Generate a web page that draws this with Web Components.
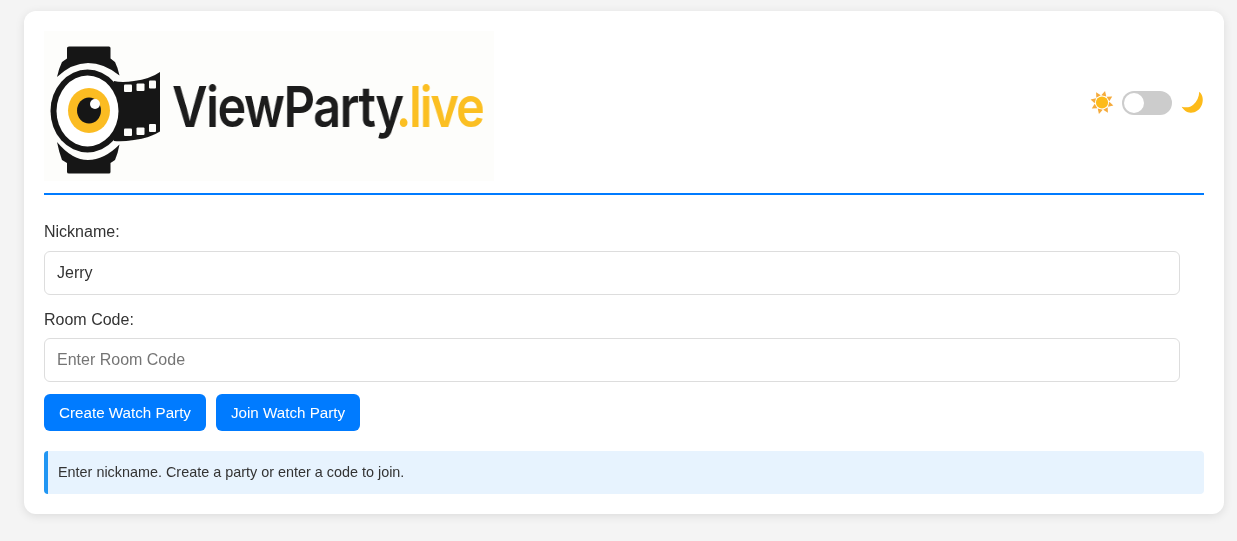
<!DOCTYPE html>
<html lang="en">
<head>
<meta charset="utf-8">
<title>ViewParty.live</title>
<style>
    html, body {
        margin: 0;
        height: 100%;
    }
    body {
        background: #f4f4f4;
        color: #333;
        font-family: "Liberation Sans", Arial, sans-serif;
        overflow: hidden;
    }
</style>
</head>
<body>
<vp-app>
    <vp-header></vp-header>
    <vp-field label="Nickname:" value="Jerry"></vp-field>
    <vp-field label="Room Code:" placeholder="Enter Room Code"></vp-field>
    <vp-actions>
        <vp-button>Create Watch Party</vp-button>
        <vp-button>Join Watch Party</vp-button>
    </vp-actions>
    <vp-status>Enter nickname. Create a party or enter a code to join.</vp-status>
</vp-app>

<script>
class VpApp extends HTMLElement {
    connectedCallback() {
        this.attachShadow({ mode: 'open' });
        this.shadowRoot.innerHTML = `
            <style>
                :host {
                    display: block;
                    box-sizing: border-box;
                    width: 1200px;
                    margin: 11px 0 0 24px;
                    padding: 20px;
                    background: #fff;
                    border-radius: 12px;
                    box-shadow: 0 2px 10px rgba(0, 0, 0, 0.1);
                    will-change: transform;
                }
            </style>
            <slot></slot>
        `;
    }
}

class VpHeader extends HTMLElement {
    connectedCallback() {
        this.attachShadow({ mode: 'open' });
        this.shadowRoot.innerHTML = `
            <style>
                :host {
                    display: flex;
                    justify-content: space-between;
                    align-items: center;
                    padding-bottom: 12px;
                    border-bottom: 2px solid #007bff;
                    margin-bottom: 24px;
                }
            </style>
            <vp-logo></vp-logo>
            <vp-theme-toggle></vp-theme-toggle>
        `;
    }
}

class VpLogo extends HTMLElement {
    connectedCallback() {
        this.attachShadow({ mode: 'open' });
        this.shadowRoot.innerHTML = `
            <style>
                :host {
                    display: block;
                    width: 450px;
                    height: 150px;
                }
                svg { display: block; }
                text {
                    font-family: Inter, "Liberation Sans", sans-serif;
                    font-size: 56px;
                    font-weight: 600;
                    letter-spacing: -1.6px;
                }
                .tld { letter-spacing: -2.4px; }
            </style>
            <svg width="450" height="150" viewBox="0 0 450 150">
                <defs>
                    <filter id="soft" x="-5%" y="-5%" width="110%" height="110%">
                        <feGaussianBlur stdDeviation="0.45"/>
                    </filter>
                </defs>
                <rect width="450" height="150" fill="#fdfdfb"/>
                <g filter="url(#soft)">
                    <path fill="#161616" d="M25 15.500H65Q66.500 15.500 66.500 17V27.500L71 31Q74 37 75.500 44.500Q60 32 44 32Q28 32 13 46Q15 37 18 31L23 27.500V17Q23 15.500 25 15.500Z"/>
                    <path fill="#161616" d="M13 111Q28 129 44 129Q60 129 75.500 113.500Q74 122 71 129L66.500 132V141Q66.500 142.500 65 142.500H25Q23 142.500 23 141V132L18 129Q15 121 13 111Z"/>
                    <path fill="#161616" d="M70 50Q78 52 90 50Q106 48 116 41V100.500Q106 107 90 109Q78 111 70 110Z"/>
                    <ellipse cx="43.500" cy="80" rx="37" ry="41.500" fill="#161616"/>
                    <ellipse cx="43.500" cy="80" rx="31" ry="35.500" fill="#fff"/>
                    <ellipse cx="45" cy="79.500" rx="21" ry="22.500" fill="#fbbc24"/>
                    <ellipse cx="45" cy="79.500" rx="12" ry="13" fill="#161616"/>
                    <circle cx="51" cy="73" r="5" fill="#fff"/>
                    <g fill="#fdfdfb">
                        <rect x="80" y="53.500" width="8" height="7.500" rx="1"/>
                        <rect x="92.500" y="52.500" width="8" height="7.500" rx="1"/>
                        <rect x="105" y="49.500" width="7" height="8" rx="1"/>
                        <rect x="80" y="97.500" width="8" height="7.500" rx="1"/>
                        <rect x="92.500" y="96.500" width="8" height="7.500" rx="1"/>
                        <rect x="105" y="93" width="7" height="8" rx="1"/>
                    </g>
                    <text transform="translate(128 96) scale(0.87 1)"><tspan fill="#1a1a1a">ViewParty</tspan><tspan class="tld" dx="-8" fill="#fbbf24">.live</tspan></text>
                </g>
            </svg>
        `;
    }
}

class VpThemeToggle extends HTMLElement {
    connectedCallback() {
        this.attachShadow({ mode: 'open' });
        // sun rays sit clear of the disc, slightly turned like the emoji
        const rays = [0, 45, 90, 135, 180, 225, 270, 315].map(a =>
            `<path d="M12 -0.300L14.600 4.600H9.400Z" fill="#f5ab3c" transform="rotate(${a + 15} 12 11.500)"/>`
        ).join('');
        this.shadowRoot.innerHTML = `
            <style>
                :host {
                    display: flex;
                    align-items: center;
                    gap: 8px;
                    margin-bottom: 6px;
                }
                svg { display: block; overflow: visible; }
                .track {
                    width: 50px;
                    height: 24px;
                    border-radius: 12px;
                    background: #ccc;
                    padding: 2px;
                    box-sizing: border-box;
                }
                .knob {
                    width: 20px;
                    height: 20px;
                    border-radius: 50%;
                    background: #fff;
                }
            </style>
            <svg width="24" height="24" viewBox="0 0 24 24">
                ${rays}
                <circle cx="12" cy="11.500" r="6.100" fill="#fdbb1a"/>
            </svg>
            <div class="track"><div class="knob"></div></div>
            <svg width="24" height="24" viewBox="0 0 24 24">
                <path fill="#fdbb1a" d="M19.300 0.700C23 4 23.500 9 22 13.500C20 19 15 22 10.500 21.700C7 21.500 3.500 19 1.700 15.700C6 17 10.500 16.500 13.500 13.500C17 10.500 19 6 19.300 0.700Z"/>
            </svg>
        `;
    }
}

class VpField extends HTMLElement {
    connectedCallback() {
        this.attachShadow({ mode: 'open' });
        this.shadowRoot.innerHTML = `
            <style>
                :host {
                    display: block;
                    padding-top: 4px;
                    margin-bottom: 12px;
                }
                label {
                    display: block;
                    font-size: 16px;
                    line-height: 18px;
                    margin-bottom: 9px;
                }
                :host(:first-of-type) label { margin-bottom: 10px; }
                input {
                    display: block;
                    box-sizing: border-box;
                    width: 1136px;
                    height: 44px;
                    padding: 12px;
                    border: 1px solid #ddd;
                    border-radius: 6px;
                    background: #fff;
                    color: #333;
                    font: 16px "Liberation Sans", Arial, sans-serif;
                    outline: none;
                }
                input::placeholder { color: #757575; }
            </style>
            <label for="f">${this.getAttribute('label')}</label>
            <input id="f" type="text">
        `;
        const input = this.shadowRoot.querySelector('input');
        input.value = this.getAttribute('value') || '';
        input.placeholder = this.getAttribute('placeholder') || '';
    }
}

class VpActions extends HTMLElement {
    connectedCallback() {
        this.attachShadow({ mode: 'open' });
        this.shadowRoot.innerHTML = `
            <style>
                :host {
                    display: flex;
                    gap: 10px;
                    margin: 12px 0 20px;
                }
            </style>
            <slot></slot>
        `;
    }
}

class VpButton extends HTMLElement {
    connectedCallback() {
        this.attachShadow({ mode: 'open' });
        this.shadowRoot.innerHTML = `
            <style>
                :host { display: block; }
                button {
                    display: block;
                    height: 37px;
                    padding: 0 15px;
                    border: none;
                    border-radius: 6px;
                    background: #007bff;
                    color: #fff;
                    font: 15.200px "Liberation Sans", Arial, sans-serif;
                    cursor: pointer;
                }
                button:hover { background: #0069d9; }
            </style>
            <button><slot></slot></button>
        `;
    }
}

class VpStatus extends HTMLElement {
    connectedCallback() {
        this.attachShadow({ mode: 'open' });
        this.shadowRoot.innerHTML = `
            <style>
                :host {
                    display: block;
                    padding: 12px 10px;
                    border-left: 4px solid #2196f3;
                    border-radius: 4px;
                    background: #e7f3fe;
                    color: #333;
                    font-size: 14.400px;
                    line-height: 19px;
                }
            </style>
            <slot></slot>
        `;
    }
}

customElements.define('vp-app', VpApp);
customElements.define('vp-header', VpHeader);
customElements.define('vp-logo', VpLogo);
customElements.define('vp-theme-toggle', VpThemeToggle);
customElements.define('vp-field', VpField);
customElements.define('vp-actions', VpActions);
customElements.define('vp-button', VpButton);
customElements.define('vp-status', VpStatus);
</script>
</body>
</html>
